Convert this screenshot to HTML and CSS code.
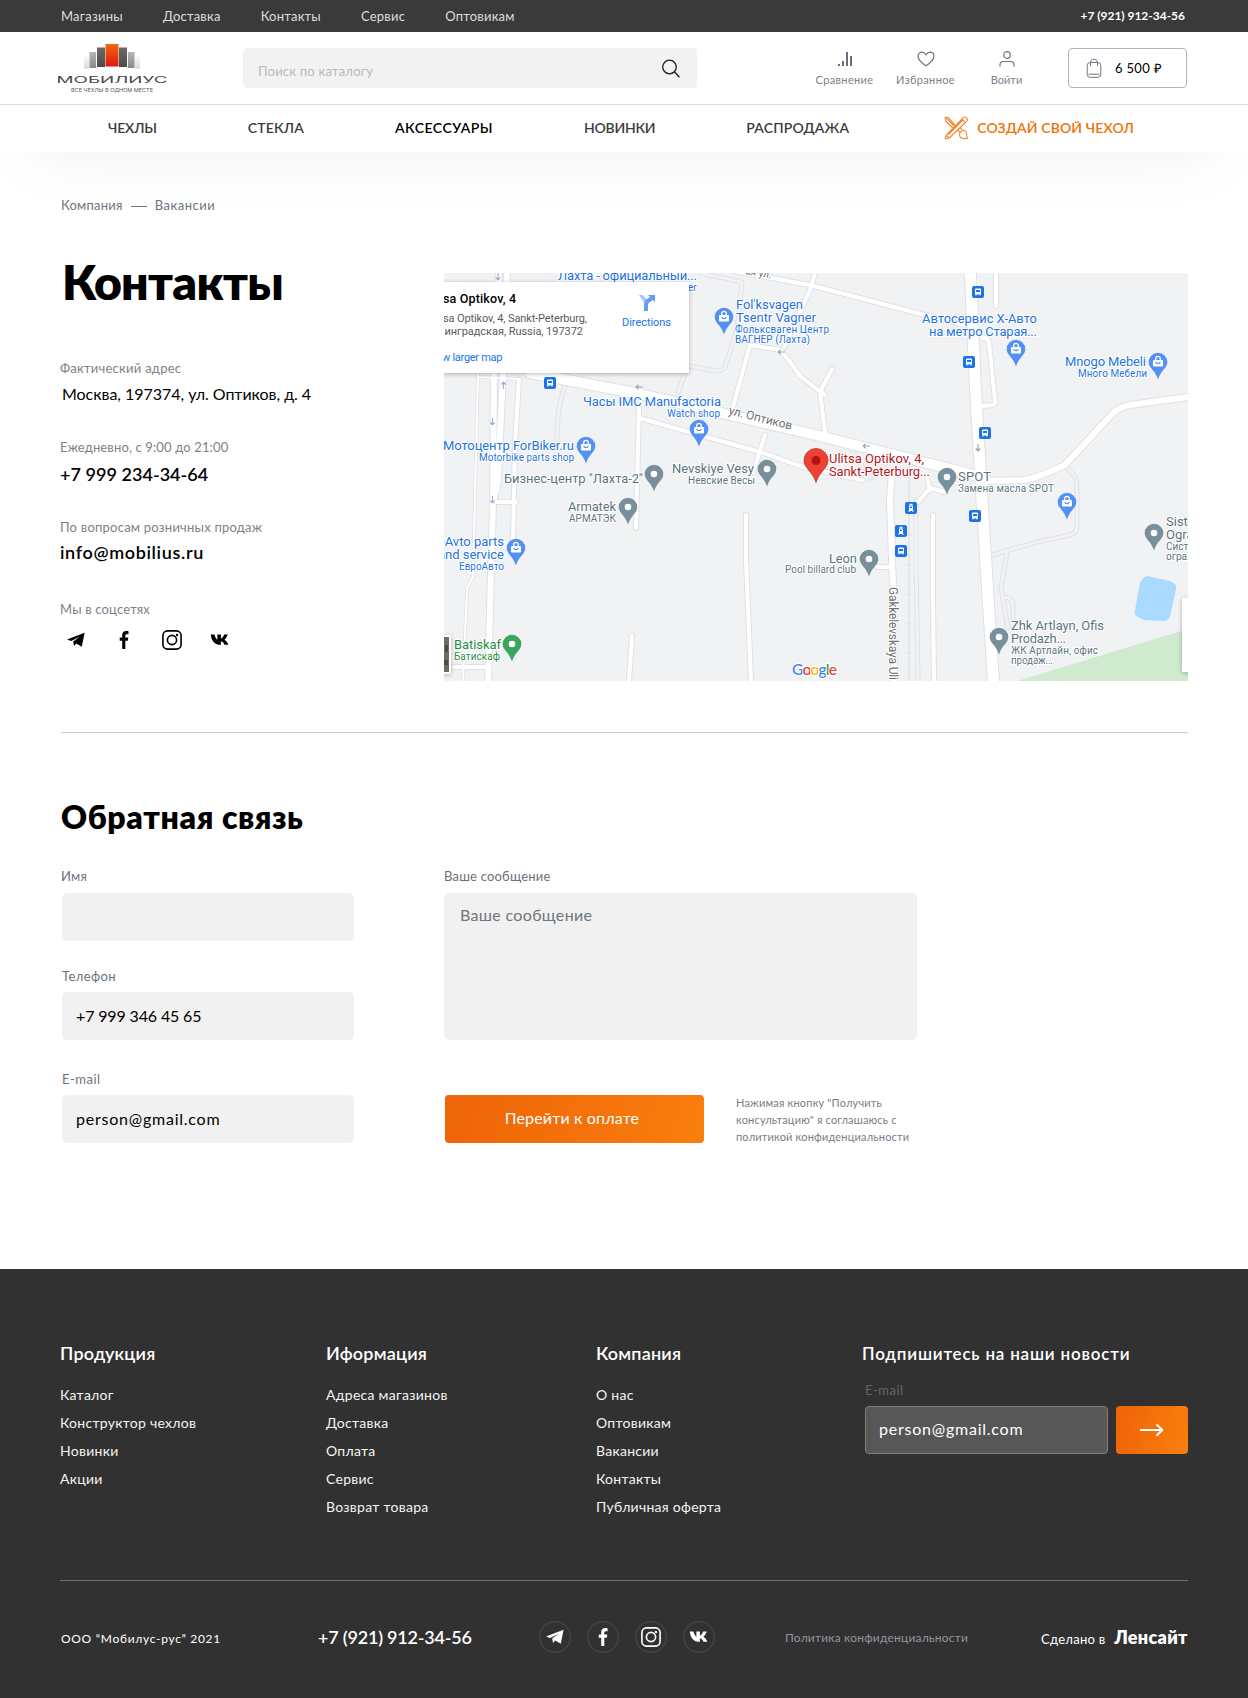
FILE: index.html
```html
<!DOCTYPE html>
<html lang="ru">
<head>
<meta charset="utf-8">
<title>Мобилиус — Контакты</title>
<link rel="stylesheet" href="styles.css">
</head>
<body>
<svg class="sprite" width="0" height="0" aria-hidden="true">
  <symbol id="telegram" viewBox="0 0 20 20"><path d="M1 9.6 18.6 2.8 15.8 16.8 10.2 13.4 8 16 7.2 11.6 14 6.4 5.2 11Z"/></symbol>
  <symbol id="facebook" viewBox="0 0 20 20"><path d="M8.2 19v-8.2H5.7V7.5h2.5V5c0-2.7 1.6-4 4-4 1 0 1.900.1 2.300.2v3.100h-1.700c-1.100 0-1.500.5-1.500 1.500v1.700h3l-.5 3.300h-2.500V19Z"/></symbol>
  <symbol id="instagram" viewBox="0 0 20 20"><g fill="none" stroke="currentColor" stroke-width="1.6"><rect x=".9" y=".9" width="18.200" height="18.200" rx="4.600"/><circle cx="10" cy="10" r="4.600"/></g><circle cx="15" cy="5" r="1.200"/></symbol>
  <symbol id="vk" viewBox="0 0 20 20"><path d="M.8 4.500h3.600c.7 2.500 1.800 4.500 3 5.300V4.500h3.500v4.200c1.400-.5 2.600-2.300 3.200-4.200h3.600c-.6 2.300-1.800 4-3.300 5.200 1.800 1 3.100 2.700 4 5.100h-3.900c-.7-1.900-1.900-3.100-3.600-3.500v3.500h-.5C5.500 14.800 1.200 11.500.8 4.500Z"/></symbol>
  <symbol id="pin" viewBox="-10 -10 20 28" overflow="visible"><path d="M0-9.300A9.300 9.300 0 0 1 9.300 0C9.300 6 3 8 0 17.500-3 8-9.300 6-9.300 0A9.300 9.300 0 0 1 0-9.300Z"/></symbol>
  <symbol id="dot-pin" viewBox="-10 -10 20 28"><use href="#pin" x="-10" y="-10" width="20" height="28"/><circle r="3.300" fill="#fff"/></symbol>
  <symbol id="shop-pin" viewBox="-10 -10 20 28"><use href="#pin" x="-10" y="-10" width="20" height="28" fill="#5491f5"/><rect x="-5" y="-2" width="10" height="6.500" rx="1" fill="#fff"/><path d="M-2.300-2v-1.300a2.300 2.300 0 0 1 4.600 0V-2" fill="none" stroke="#fff" stroke-width="1.300"/><path d="M-2.300 0a2.400 2.400 0 0 0 4.600 0" fill="none" stroke="#5491f5" stroke-width="1.200"/></symbol>
  <symbol id="bus" viewBox="0 0 12 12"><rect width="12" height="12" rx="2" fill="#1a73e8"/><path d="M3 3.500Q3 2.500 4 2.500h4q1 0 1 1v5H8.500v1h-1v-1h-3v1h-1v-1H3Z" fill="#fff"/><path d="M4 4h4v2H4Z" fill="#1a73e8"/></symbol>
  <symbol id="tram" viewBox="0 0 12 12"><rect width="12" height="12" rx="2" fill="#1a73e8"/><path d="M4.300 1.800h3.400v.9H6.500v.8H8v4.700l1 1.600H7.800L7.200 9H4.800l-.6.800H3l1-1.600V3.500h1.500v-.8H4.300Z" fill="#fff"/><path d="M5 4.600h2v1.500H5Z" fill="#1a73e8"/></symbol>
  <symbol id="one-way" viewBox="0 0 8 6"><path d="M8 3H1.500M3.500.8 1.200 3l2.300 2.200" fill="none" stroke="currentColor" stroke-width="1.200"/></symbol>
</svg>

<header class="header">
  <div class="topbar">
    <nav class="topbar-nav"><a>Магазины</a><a>Доставка</a><a>Контакты</a><a>Сервис</a><a>Оптовикам</a></nav>
    <a class="topbar-phone">+7 (921) 912-34-56</a>
  </div>
  <div class="mainbar">
    <svg class="logo" width="112" height="50" viewBox="56 43 112 50">
      <defs>
        <linearGradient id="lr" x2="0" y2="1"><stop stop-color="#f26a0a"/><stop offset="1" stop-color="#df1612"/></linearGradient>
        <linearGradient id="ld" x2="0" y2="1"><stop stop-color="#6c6a69"/><stop offset="1" stop-color="#4c4a49"/></linearGradient>
        <linearGradient id="lg" x2="0" y2="1"><stop stop-color="#b6b5b5"/><stop offset="1" stop-color="#8b8988"/></linearGradient>
        <linearGradient id="ll" x2="0" y2="1"><stop stop-color="#f7f7f7"/><stop offset="1" stop-color="#dadada"/></linearGradient>
      </defs>
      <path fill="url(#ll)" d="M84 57h5v12h-5zM135 57h5v12h-5z"/>
      <path fill="url(#lg)" d="M89.500 52H96v16h-6.500zM128 52h6.500v16H128z"/>
      <path fill="url(#ld)" d="M97 47.500h8V67h-8zM119 47.500h8V67h-8z"/>
      <path fill="url(#lr)" d="M105.500 44h13v22.500h-13z"/>
      <text class="logo-name" x="56.500" y="83" textLength="111" lengthAdjust="spacingAndGlyphs">МОБИЛИУС</text>
      <text class="logo-tag" x="71" y="92" textLength="82" lengthAdjust="spacingAndGlyphs">ВСЕ ЧЕХЛЫ В ОДНОМ МЕСТЕ</text>
    </svg>
    <div class="search">
      <span>Поиск по каталогу</span>
      <svg width="20" height="20" viewBox="0 0 20 20"><circle cx="8.500" cy="8" r="6.800"/><path d="m13.300 12.800 5.200 5.400"/></svg>
    </div>
    <nav class="actions">
      <a><svg width="16" height="16" viewBox="0 0 16 16" class="solid"><path d="M1 13h2v2H1zM5 10h2v5H5zM9 1h2v14H9zM13 5h2v10h-2z"/></svg><span>Сравнение</span></a>
      <a><svg width="18" height="16" viewBox="0 0 18 16"><path d="M9 14.800C4.500 11.800 1 8.700 1 5.200 1 2.800 2.700 1.200 4.800 1.200 6.600 1.200 8 2.200 9 3.800c1-1.600 2.400-2.600 4.200-2.600C15.300 1.200 17 2.800 17 5.200c0 3.500-3.500 6.600-8 9.600Z"/></svg><span>Избранное</span></a>
      <a class="login"><svg width="16" height="16" viewBox="0 0 16 16"><circle cx="8" cy="4" r="3.300"/><path d="M1 15.500v-1.700q0-3.300 3.300-3.300h7.400q3.300 0 3.300 3.300v1.700"/></svg><span>Войти</span></a>
    </nav>
    <a class="cart"><svg width="16" height="20" viewBox="0 0 16 20"><rect x="1.200" y="4.500" width="13.600" height="14.800" rx="3"/><path d="M4.500 8V4.700A3.500 3.500 0 0 1 8 1.200a3.500 3.500 0 0 1 3.500 3.500V8M2.500 16.200h11"/></svg><span>6 500 ₽</span></a>
  </div>
  <nav class="catalog">
    <a class="c1">ЧЕХЛЫ</a><a class="c2">СТЕКЛА</a><a class="c3">АКСЕССУАРЫ</a><a class="c4">НОВИНКИ</a><a class="c5">РАСПРОДАЖА</a>
    <a class="create"><svg width="24" height="24" viewBox="0 0 24 24"><path d="M2 19.500 18.500 2.500Q20-.1 22.500 2q2 2-.5 4L5.200 22 1.200 23ZM4.500 18.500 18.800 4M18 3.200l3.500 3.600M2 19.500 5.200 22M11 9 4 1.500 1 1.200 1.600 5 9.300 12.300M2.500 2.500l8 8M14 14.500l2.300 2M16.500 12.200l2.300 2.500M16 17q1-2.500 3-2.500 3.500 0 3.500 3 0 3 1 5-6 .5-7.300-1.500T16 17Z"/></svg><span>СОЗДАЙ СВОЙ ЧЕХОЛ</span></a>
  </nav>
</header>

<main class="page">
  <div class="crumbs"><a>Компания</a><i></i><a>Вакансии</a></div>
  <section class="contacts">
    <div class="details">
      <h1>Контакты</h1>
      <p class="label address-label">Фактический адрес</p>
      <p class="address">Москва, 197374, ул. Оптиков, д. 4</p>
      <p class="label hours-label">Ежедневно, с 9:00 до 21:00</p>
      <p class="strong phone">+7 999 234-34-64</p>
      <p class="label retail-label">По вопросам розничных продаж</p>
      <p class="strong email">info@mobilius.ru</p>
      <p class="label social-label">Мы в соцсетях</p>
      <div class="socials">
        <svg width="20" height="20"><use href="#telegram"/></svg>
        <svg width="20" height="20"><use href="#facebook"/></svg>
        <svg width="20" height="20"><use href="#instagram"/></svg>
        <svg width="20" height="20"><use href="#vk"/></svg>
      </div>
    </div>
    <svg class="map" width="744" height="408" viewBox="444 273 744 408">
      <rect x="444" y="273" width="744" height="408" fill="#f1f2f4"/>
      <path d="M1017 681 1188 629V681Z" fill="#d0ead0"/>
      <path d="M1147 576 1170 581 1175 584Q1177 586 1176 589L1170 616Q1169 621 1163 621L1144 620 1136 616Q1134 614 1135 610L1140 583Q1142 578 1147 576Z" fill="#aadaff"/>
      <g class="lane-edge">
        <path d="M700 273 742 282 737 330 725 367Q723 371 716 371L689 366M567 383Q557 400 557 440M685 373 678 393M1065 465 1075 477Q1077 480 1077 490V526Q1077 533 1070 535L1037 542 992 555M1007 552 1001 588 1008 628M1003 597Q1013 597 1013 605V628M916 500V560L918 681M850 447 870 478M885 459V475"/>
      </g>
      <g class="lane">
        <path d="M700 273 742 282 737 330 725 367Q723 371 716 371L689 366M567 383Q557 400 557 440M685 373 678 393M1065 465 1075 477Q1077 480 1077 490V526Q1077 533 1070 535L1037 542 992 555M1007 552 1001 588 1008 628M1003 597Q1013 597 1013 605V628M916 500V560L918 681M850 447 870 478M885 459V475"/>
      </g>
      <path d="M909 460V681M907 535h4M907 565h4M907 594h4M907 623h4M907 653h4" fill="none" stroke="#dadce0"/>
      <g class="edge">
        <path class="w3" d="M478 372 473 577 467 588 463 681M478 377 520 379"/>
        <path class="w5" d="M519 380 515 445 513 541M497 502h19M453 667h35M639 407 636 528M639 418 760 452 803 467 862 480M765 435 753 473M750 345 733 407M815 273 810 290 784 347M750 345 781 350 801 377 825 395M820 392 832 369M820 392 825 432M733 271 810 285 925 315 965 325M996 273V306M982 338Q988 337 989 343L995 400Q996 404 992 405L983 406M877 567h16M933 515V600L934 681M918 502 930 488 945 492M930 490 927 477M746 515V560L751 681M632 636 629 681"/>
        <path class="w6" d="M499 273 494 373 493 503 490 610 488 681M507 273 503 373 498 480 493 503M985 481 1023 480Q1035 479 1065 465L1114 412Q1120 407 1130 405L1188 397M892 472 890 500 893 587 894 681"/>
        <path class="w10" d="M530 373 640 394 730 415 820 436 863 447 943 467 985 478"/>
        <path class="w11" d="M970 265 975 380 982 500 987 580 994 690"/>
      </g>
      <g class="road">
        <path class="w3" d="M478 372 473 577 467 588 463 681M478 377 520 379"/>
        <path class="w5" d="M519 380 515 445 513 541M497 502h19M453 667h35M639 407 636 528M639 418 760 452 803 467 862 480M765 435 753 473M750 345 733 407M815 273 810 290 784 347M750 345 781 350 801 377 825 395M820 392 832 369M820 392 825 432M733 271 810 285 925 315 965 325M996 273V306M982 338Q988 337 989 343L995 400Q996 404 992 405L983 406M877 567h16M933 515V600L934 681M918 502 930 488 945 492M930 490 927 477M746 515V560L751 681M632 636 629 681"/>
        <path class="w6" d="M499 273 494 373 493 503 490 610 488 681M507 273 503 373 498 480 493 503M985 481 1023 480Q1035 479 1065 465L1114 412Q1120 407 1130 405L1188 397M892 472 890 500 893 587 894 681"/>
        <path class="w10" d="M530 373 640 394 730 415 820 436 863 447 943 467 985 478"/>
        <path class="w11" d="M970 265 975 380 982 500 987 580 994 690"/>
      </g>
      <g color="#9aa5b1">
        <use href="#one-way" x="635" y="384" width="8" height="6"/>
        <use href="#one-way" x="777" y="349" width="8" height="6"/>
        <use href="#one-way" x="862" y="443" width="8" height="6"/>
        <use href="#one-way" transform="translate(975 452) rotate(-90)" width="8" height="6"/>
      </g>
      <g color="#a3a8d4">
        <use href="#one-way" transform="translate(503.500 381) rotate(90)" width="8" height="6" y="-3"/>
        <use href="#one-way" transform="translate(492.500 426) rotate(-90)" width="8" height="6" y="-3"/>
        <use href="#one-way" transform="translate(492.500 504) rotate(-90)" width="8" height="6" y="-3"/>
        <use href="#one-way" transform="translate(498 281) rotate(-90)" width="8" height="6" y="-3"/>
      </g>

      <g class="place shop">
        <text x="558" y="280" textLength="139">Лахта - официальный...</text>
        <text x="688" y="291" class="small">er</text>
        <text x="736" y="309" textLength="67">Fol'ksvagen</text>
        <text x="736" y="322" textLength="80">Tsentr Vagner</text>
        <text x="735" y="332.500" class="small" textLength="94">Фольксваген Центр</text>
        <text x="735" y="343" class="small" textLength="75">ВАГНЕР (Лахта)</text>
        <text x="922" y="322.500" textLength="115">Автосервис Х-Авто</text>
        <text x="929" y="335.500" textLength="108">на метро Старая...</text>
        <text x="1065" y="366" textLength="81">Mnogo Mebeli</text>
        <text x="1078" y="376.500" class="small" textLength="69">Много Мебели</text>
        <text x="583" y="406" textLength="138">Часы IMC Manufactoria</text>
        <text x="667" y="416.500" class="small" textLength="53">Watch shop</text>
        <text x="443" y="450" textLength="131">Мотоцентр ForBiker.ru</text>
        <text x="479" y="460.500" class="small" textLength="95">Motorbike parts shop</text>
        <text x="504" y="546" text-anchor="end">oAvto parts</text>
        <text x="504" y="558.500" text-anchor="end">and service</text>
        <text x="459" y="569.500" class="small" textLength="45">ЕвроАвто</text>
      </g>
      <g class="place org">
        <text x="504" y="483" textLength="139">Бизнес-центр "Лахта-2"</text>
        <text x="672" y="473" textLength="82">Nevskiye Vesy</text>
        <text x="688" y="483.500" class="small" textLength="67">Невские Весы</text>
        <text x="568" y="511" textLength="48">Armatek</text>
        <text x="569" y="521.500" class="small" textLength="47">АРМАТЭК</text>
        <text x="829" y="563" textLength="28">Leon</text>
        <text x="785" y="573" class="small" textLength="71">Pool billard club</text>
        <text x="958" y="481" textLength="33">SPOT</text>
        <text x="958" y="491.500" class="small" textLength="96">Замена масла SPOT</text>
        <text x="1166" y="526">Sist</text>
        <text x="1166" y="539">Ogra</text>
        <text x="1166" y="549.500" class="small">Сист</text>
        <text x="1166" y="559.500" class="small">огра.</text>
        <text x="1011" y="630" textLength="93">Zhk Artlayn, Ofis</text>
        <text x="1011" y="643" textLength="55">Prodazh...</text>
        <text x="1011" y="653.500" class="small" textLength="87">ЖК Артлайн, офис</text>
        <text x="1011" y="663.500" class="small" textLength="42">продаж...</text>
      </g>
      <g class="place park">
        <text x="454" y="649" textLength="47">Batiskaf</text>
        <text x="454" y="659.500" class="small" textLength="46">Батискаф</text>
      </g>
      <g class="place target">
        <text x="829" y="463" textLength="95">Ulitsa Optikov, 4,</text>
        <text x="829" y="476" textLength="101">Sankt-Peterburg...</text>
      </g>
      <g class="place street">
        <text transform="translate(728 414) rotate(14)" textLength="65">ул. Оптиков</text>
        <text transform="translate(889 587) rotate(90)" textLength="93">Gakkelevskaya Uli</text>
        <text transform="translate(745 274) rotate(10)" class="small">ая ул.</text>
      </g>

      <g>
        <use href="#shop-pin" x="714" y="307" width="20" height="28"/>
        <use href="#shop-pin" x="689" y="419" width="20" height="28"/>
        <use href="#shop-pin" x="576" y="436" width="20" height="28"/>
        <use href="#shop-pin" x="1006" y="339" width="20" height="28"/>
        <use href="#shop-pin" x="1148" y="352" width="20" height="28"/>
        <use href="#shop-pin" x="1057" y="492" width="20" height="28"/>
        <use href="#shop-pin" x="506" y="538" width="20" height="28"/>
      </g>
      <g fill="#78909c">
        <use href="#dot-pin" x="644" y="464" width="20" height="28"/>
        <use href="#dot-pin" x="757" y="459" width="20" height="28"/>
        <use href="#dot-pin" x="937" y="467" width="20" height="28"/>
        <use href="#dot-pin" x="618" y="497" width="20" height="28"/>
        <use href="#dot-pin" x="859" y="549" width="20" height="28"/>
        <use href="#dot-pin" x="989" y="627" width="20" height="28"/>
        <use href="#dot-pin" x="1144" y="523" width="20" height="28"/>
      </g>
      <use href="#dot-pin" x="502" y="634" width="20" height="28" fill="#3ba55b"/>
      <path d="M816 448.500a12 12 0 0 1 12 12C828 468 819 472 816 482.500 813 472 804 468 804 460.500a12 12 0 0 1 12-12Z" fill="#ea4335" stroke="#c5322a" stroke-width=".8"/>
      <circle cx="816" cy="460.500" r="4.500" fill="#b31412"/>
      <g>
        <use href="#bus" x="544" y="377" width="12" height="12"/>
        <use href="#bus" x="972" y="286" width="12" height="12"/>
        <use href="#bus" x="963" y="356" width="12" height="12"/>
        <use href="#bus" x="979" y="427" width="12" height="12"/>
        <use href="#bus" x="969" y="510" width="12" height="12"/>
        <use href="#bus" x="895" y="545" width="12" height="12"/>
        <use href="#tram" x="905" y="502" width="12" height="12"/>
        <use href="#tram" x="895" y="525" width="12" height="12"/>
      </g>
      <text class="google" x="792" y="675" textLength="45"><tspan fill="#4285f4">G</tspan><tspan fill="#ea4335">o</tspan><tspan fill="#fbbc05">o</tspan><tspan fill="#4285f4">g</tspan><tspan fill="#34a853">l</tspan><tspan fill="#ea4335">e</tspan></text>
      <g class="panel">
        <rect x="434" y="282" width="255" height="91" rx="1"/>
        <rect x="434" y="635" width="17" height="39" rx="2"/>
        <rect x="1182" y="598" width="16" height="74" rx="1"/>
      </g>
      <path d="M444 637h5v35h-5z" fill="#6f6a64"/><path d="M445 645h3v7h-3zM444 660h4v5h-4z" fill="#514b48"/>
      <g class="card">
        <text x="443" y="303" class="card-title" textLength="73">sa Optikov, 4</text>
        <text x="443" y="322" textLength="144">sa Optikov, 4, Sankt-Peterburg,</text>
        <text x="444.500" y="334.500" textLength="138.500">инградская, Russia, 197372</text>
        <text x="442" y="361" class="link" textLength="60.500">w larger map</text>
        <text x="622" y="326" class="link" textLength="49">Directions</text>
      </g>
      <path d="M639 295h4l5 6-3 3ZM644 305h4v6h-4z" fill="#a9c7fa"/>
      <path d="M644 311V304Q644 301 647 299L650 297 648 295H655V302L653 300 650 302Q648 303 648 305V311Z" fill="#669df6"/>
    </svg>
  </section>

  <section class="feedback">
    <h2>Обратная связь</h2>
    <form class="form">
      <div>
        <label class="label" for="name">Имя</label>
        <input id="name" class="field">
        <label class="label phone-label" for="tel">Телефон</label>
        <input id="tel" class="field tel" value="+7 999 346 45 65">
        <label class="label mail-label" for="mail">E-mail</label>
        <input id="mail" class="field mail" value="person@gmail.com">
      </div>
      <div>
        <label class="label" for="msg">Ваше сообщение</label>
        <textarea id="msg" class="message" placeholder="Ваше сообщение"></textarea>
        <div class="submit">
          <button type="button" class="button">Перейти к оплате</button>
          <p>Нажимая кнопку "Получить<br>консультацию" я соглашаюсь с<br>политикой конфиденциальности</p>
        </div>
      </div>
    </form>
  </section>
</main>

<footer class="footer">
  <div class="footer-top">
    <div><h3>Продукция</h3><ul><li>Каталог</li><li>Конструктор чехлов</li><li>Новинки</li><li>Акции</li></ul></div>
    <div><h3>Иформация</h3><ul><li>Адреса магазинов</li><li>Доставка</li><li>Оплата</li><li>Сервис</li><li>Возврат товара</li></ul></div>
    <div><h3>Компания</h3><ul><li>О нас</li><li>Оптовикам</li><li>Вакансии</li><li>Контакты</li><li>Публичная оферта</li></ul></div>
    <div class="subscribe">
      <h3>Подпишитесь на наши новости</h3>
      <label class="label" for="news">E-mail</label>
      <div class="subscribe-row">
        <input id="news" class="mail" value="person@gmail.com">
        <button type="button" aria-label="Подписаться"><svg width="24" height="14" viewBox="0 0 24 14"><path d="M0 7h22M16.500 1.300 22.300 7l-5.800 5.700"/></svg></button>
      </div>
    </div>
  </div>
  <div class="footer-bottom">
    <span class="copy">ООО “Мобилус-рус” 2021</span>
    <span class="footer-phone">+7 (921) 912-34-56</span>
    <div class="circles">
      <a><svg width="20" height="20"><use href="#telegram"/></svg></a>
      <a><svg width="20" height="20"><use href="#facebook"/></svg></a>
      <a><svg width="20" height="20"><use href="#instagram"/></svg></a>
      <a><svg width="20" height="20"><use href="#vk"/></svg></a>
    </div>
    <span class="policy">Политика конфиденциальности</span>
    <span class="made">Сделано в <b>Ленсайт</b></span>
  </div>
</footer>
</body>
</html>
```

FILE: styles.css
```css
* { box-sizing: border-box; }
body { margin: 0; background: #fff; font-family: Lato, "Open Sans", sans-serif; color: #000; }
h1, h2, h3, p, ul { margin: 0; padding: 0; }
ul { list-style: none; }
input, textarea, button { font: inherit; border: 0; outline: 0; margin: 0; }
a, span, p, h1, h2, h3, li, label { white-space: nowrap; }
.sprite { display: block; }

/* Header */
.header { position: relative; background: #fff; box-shadow: 0 40px 60px -40px rgba(100, 120, 145, .13); }
.topbar { display: flex; justify-content: space-between; align-items: center; height: 32px; padding: 0 63px 0 61px; background: #3a3a3a; color: #dedede; font-size: 13px; line-height: 16px; }
.topbar-nav { display: flex; gap: 40px; padding-bottom: 1px; letter-spacing: .22px; }
.topbar-phone { color: #fff; font-size: 12px; font-weight: 700; letter-spacing: -.02px; }
.mainbar { display: flex; align-items: center; height: 73px; padding-left: 56px; border-bottom: 1px solid #d6dae0; }
.logo { margin-bottom: 1px; }
.logo-name { font: 400 9.500px Inter, sans-serif; fill: #4a4848; }
.logo-tag { font: 400 4.800px Inter, sans-serif; fill: #555; }
.search { display: flex; justify-content: space-between; align-items: center; width: 454px; height: 40px; margin-left: 75px; padding: 0 16px 0 15px; background: #f2f2f2; border-radius: 4px; }
.search span { padding-top: 5px; color: #b9b9b9; font-size: 13px; letter-spacing: .22px; }
.search svg { margin-top: 1px; fill: none; stroke: #1c1c1c; stroke-width: 1.300; }
.actions { display: grid; grid-template-columns: repeat(3, 81px); margin-left: 107px; padding-top: 1px; }
.actions a { display: flex; flex-direction: column; align-items: center; gap: 6px; color: #7b828a; font-size: 11px; line-height: 14px; letter-spacing: .36px; }
.actions .login { letter-spacing: 0; }
.actions svg { fill: none; stroke: #6b7480; stroke-width: 1.200; }
.actions .solid { fill: #65707d; stroke: none; }
.cart { display: flex; align-items: center; gap: 13px; width: 119px; height: 40px; margin-left: 21px; padding-left: 17px; border: 1px solid #adb6c0; border-radius: 4px; font-size: 13px; letter-spacing: .31px; }
.cart svg { fill: none; stroke: #6f7680; stroke-width: 1; }
.catalog { display: flex; align-items: center; gap: 91px; height: 47px; padding: 0 0 2px 108px; color: #3c3c3c; font-size: 14px; font-weight: 600; }
.c1 { letter-spacing: -.2px; }
.c2 { letter-spacing: .15px; }
.c3 { color: #000; letter-spacing: .5px; }
.c4 { letter-spacing: -.25px; }
.c5 { letter-spacing: .15px; }
.create { display: flex; align-items: center; gap: 9px; margin-left: 4px; color: #ee7203; letter-spacing: .12px; }
.create svg { fill: none; stroke: #f0882c; stroke-width: 1.100; stroke-linejoin: round; }

/* Contacts */
.page { padding: 45px 60px 126px 61px; }
.crumbs { position: relative; display: flex; align-items: center; gap: 8px; height: 16px; color: #6d757e; font-size: 13px; line-height: 16px; letter-spacing: .25px; }
.crumbs a:last-child { letter-spacing: .5px; }
.crumbs i { width: 16px; height: 1px; background: #6d757e; margin-top: 2px; }
.contacts { display: grid; grid-template-columns: 383px 744px; align-items: start; margin-top: 39px; }
.details { margin-left: -1px; }
h1 { padding: 1px 0 0 2px; font-size: 48px; line-height: 58px; font-weight: 800; letter-spacing: -.7px; }
.label { display: block; color: #7b828a; font-size: 13px; line-height: 16px; letter-spacing: .2px; }
.address-label { margin-top: 49px; letter-spacing: .26px; }
.address { margin-top: 8px; padding-left: 2px; font-size: 16px; line-height: 20px; letter-spacing: -.03px; }
.hours-label { margin-top: 35px; letter-spacing: .14px; }
.strong { font-size: 18px; line-height: 22px; font-weight: 600; }
.phone { margin-top: 8px; letter-spacing: .04px; }
.retail-label { margin-top: 34px; letter-spacing: .23px; }
.email { margin-top: 6px; letter-spacing: .65px; }
.social-label { margin-top: 38px; letter-spacing: .17px; }
.socials { display: flex; gap: 28px; margin-top: 13px; padding-left: 6px; }
.map { display: block; margin-top: 21px; }

/* Map */
.edge, .road, .lane, .lane-edge { fill: none; stroke-linecap: round; stroke-linejoin: round; }
.edge { stroke: #dfe1e4; }
.road { stroke: #fff; }
.lane-edge { stroke: #dfe1e4; stroke-width: 5px; }
.lane { stroke: #f1f2f4; stroke-width: 3px; }
.road .w3 { stroke-width: 2px; }
.edge .w3 { stroke-width: 3.500px; }
.road .w5 { stroke-width: 4px; }
.edge .w5 { stroke-width: 6px; }
.road .w6 { stroke-width: 6px; }
.edge .w6 { stroke-width: 8px; }
.road .w10 { stroke-width: 10px; }
.edge .w10 { stroke-width: 12px; }
.road .w11 { stroke-width: 11px; }
.edge .w11 { stroke-width: 13px; }
.place { font: 13px Roboto, sans-serif; paint-order: stroke; stroke: #fff; stroke-width: 2px; stroke-linejoin: round; }
.place .small { font-size: 10px; }
.shop { fill: #1f73e0; }
.org { fill: #5b7480; }
.park { fill: #1e8e3e; }
.target { fill: #b5171c; }
.street { fill: #6b7075; font-size: 12px; }
.google { font: 600 15.500px Lato, sans-serif; paint-order: stroke; stroke: #fff; stroke-width: 2px; }
.panel { fill: #fff; filter: drop-shadow(0 1px 2px rgba(0, 0, 0, .28)); }
.card { font: 11px Roboto, sans-serif; fill: #5b5b5b; }
.card-title { font-size: 12.500px; font-weight: 500; fill: #000; }
.card .link { fill: #1a73e8; }

/* Feedback */
.feedback { margin-top: 51px; padding-top: 65px; border-top: 1px solid #cbcdd2; }
h2 { font-size: 32px; line-height: 38px; font-weight: 800; letter-spacing: .6px; }
.form { display: grid; grid-template-columns: 293px 474px; column-gap: 90px; margin-top: 32px; }
.form .label { color: #6b727a; }
.field { display: block; width: 292px; height: 48px; margin: 9px 0 0 1px; padding: 0 14px 2px; background: #f1f1f1; border-radius: 5px; font-size: 16px; }
.field.tel { letter-spacing: -.15px; }
.mail { letter-spacing: .77px; }
.field.tel, .field.mail { margin-top: 8px; }
.form .phone-label { margin-top: 27px; padding-left: 1px; letter-spacing: .4px; }
.form .mail-label { margin-top: 31px; padding-left: 1px; letter-spacing: .5px; }
.message { display: block; width: 473px; height: 147px; margin-top: 9px; padding: 12px 16px; background: #f1f1f1; border-radius: 5px; font-size: 16px; line-height: 20px; letter-spacing: .33px; resize: none; }
.message::placeholder { color: #6f757d; }
.submit { display: flex; gap: 32px; height: 48px; margin: 55px 0 0 1px; }
.button { width: 259px; height: 48px; padding: 0 5px 3px 0; border-radius: 4px; color: #fff; font-size: 16px; letter-spacing: .17px; text-align: center; }
.button, .subscribe-row button { background: linear-gradient(105deg, #ee6308, #f97f0d); }
.submit p { margin-top: -1px; color: #777e86; font-size: 11px; line-height: 17px; letter-spacing: .18px; }

/* Footer */
.footer { height: 429px; padding: 73px 60px 0 60px; background: #313131; color: #fff; }
.footer-top { display: grid; grid-template-columns: 266px 270px 266px 326px; height: 239px; border-bottom: 1px solid #6f6f6f; }
h3 { font-size: 18px; line-height: 22px; font-weight: 600; letter-spacing: .2px; }
.footer li { font-size: 14px; line-height: 28px; letter-spacing: .27px; color: #f4f4f4; }
.footer ul { margin-top: 17px; }
.subscribe { padding-top: 1px; }
.subscribe h3 { font-size: 17px; letter-spacing: .8px; }
.subscribe .label { margin: 17px 0 0 3px; color: #5f656c; letter-spacing: .5px; }
.subscribe-row { display: flex; gap: 8px; margin: 8px 0 0 3px; }
.subscribe-row input { width: 243px; height: 48px; padding: 0 14px 3px 13px; border: 1px solid #808080; border-radius: 4px; background: #575757; color: #fff; font-size: 16px; }
.subscribe-row button { width: 72px; height: 48px; padding: 0; border-radius: 4px; }
.subscribe-row svg { display: block; margin: 0 auto; fill: none; stroke: #fff; stroke-width: 2; }
.footer-bottom { display: grid; grid-template-columns: 258px 221px 246px 256px auto; align-items: center; height: 112px; }
.copy { padding: 2px 0 0 1px; font-size: 12px; letter-spacing: .7px; }
.footer-phone { font-size: 18px; font-weight: 600; letter-spacing: -.2px; }
.circles { display: flex; gap: 16px; }
.circles a { display: flex; align-items: center; justify-content: center; width: 32px; height: 32px; border: 1px solid #4c4c4c; border-radius: 50%; }
.circles svg { fill: #fff; color: #fff; }
.policy { color: #9097a0; font-size: 12px; letter-spacing: .19px; }
.made { font-size: 13px; letter-spacing: .28px; }
.made b { margin-left: 5px; font-size: 18px; font-weight: 800; letter-spacing: .3px; }
```
